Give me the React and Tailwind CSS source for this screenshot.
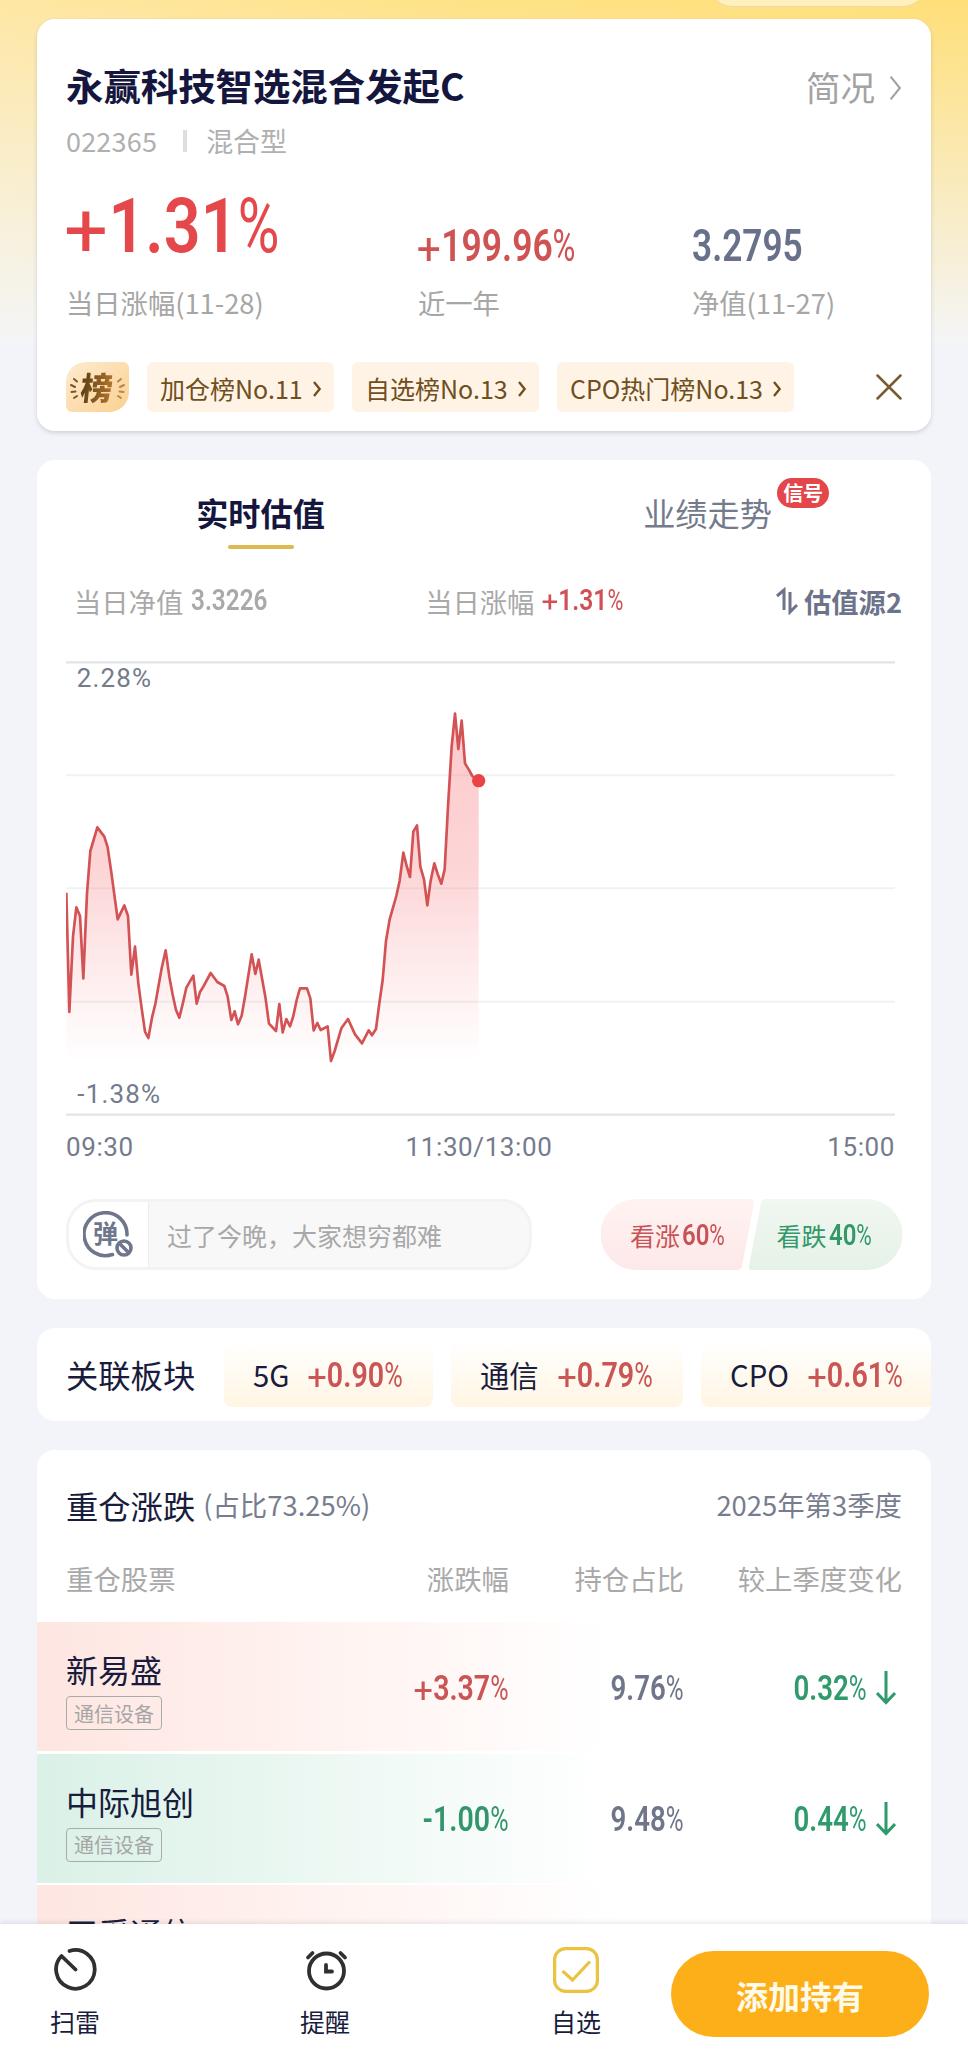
import React from 'react';

const ranks = [
  { text: '加仓榜No.11', width: 'w-[187px]' },
  { text: '自选榜No.13', width: 'w-[187px]' },
  { text: 'CPO热门榜No.13', width: 'w-[237px]' },
];

const sectors = [
  { name: '5G', change: '+0.90%', width: 'w-[209px]' },
  { name: '通信', change: '+0.79%', width: 'w-[232px]' },
  { name: 'CPO', change: '+0.61%', width: 'w-[240px]' },
];

const holdings = [
  { name: '新易盛', tag: '通信设备', change: '+3.37%', ratio: '9.76%', diff: '0.32%' },
  { name: '中际旭创', tag: '通信设备', change: '-1.00%', ratio: '9.48%', diff: '0.44%' },
  { name: '天孚通信' },
];

const linePoints =
  '79,758 88,1116 99,890 109,802 120,828 130,1015 141,760 151,633 172,562 193,590 203,622 214,697 233,838 253,796 264,828 274,1004 285,920 295,1030 305,1105 315,1175 325,1194 336,1133 346,1092 365,985 377,931 388,1010 398,1064 408,1110 418,1133 429,1088 439,1043 460,1007 470,1091 480,1056 490,1040 512,999 532,1026 553,1038 563,1070 574,1140 584,1114 594,1153 605,1127 615,1070 635,943 646,1002 656,959 676,1070 687,1151 708,1173 718,1092 728,1177 739,1137 750,1159 760,1128 770,1080 780,1045 801,1045 811,1075 821,1171 832,1149 842,1170 863,1159 873,1263 884,1233 904,1165 924,1137 945,1183 966,1210 986,1171 996,1186 1008,1167 1018,1090 1028,1020 1038,903 1049,838 1059,803 1069,768 1079,722 1090,638 1100,678 1110,711 1120,575 1131,556 1141,680 1152,718 1162,796 1172,722 1183,670 1193,702 1204,731 1214,688 1224,500 1235,320 1245,221 1255,327 1265,242 1275,370 1286,388 1297,408 1316,422';

// condensed digits: the box keeps the narrow width, the inner span is squeezed into it
// the plus and percent signs are lighter than the digits
const Num = ({ children, box, className, right }) => {
  const plus = children.startsWith('+');
  const percent = children.endsWith('%');
  const digits = children.replace('+', '').replace('%', '');

  return (
    <span className={`flex shrink-0 whitespace-nowrap font-['Roboto'] font-semibold ${right ? 'justify-end' : ''} ${box}`}>
      <span className={`inline-block ${right ? 'origin-right' : 'origin-left'} ${className}`}>
        {plus && <span className="relative top-[0.060em] mr-[0.070em] ml-[0.020em] inline-block scale-x-[1.200] font-normal">+</span>}
        {digits}
        {percent && <span className="-mr-[0.080em] inline-block origin-left scale-x-[0.880] font-normal">%</span>}
      </span>
    </span>
  );
};

const Chevron = ({ className }) => (
  <svg viewBox="0 0 12 24" fill="none" stroke="currentColor" className={className}>
    <path d="M1.5 1.5 10 12 1.5 22.5" />
  </svg>
);

const RankBadge = () => (
  <div className="relative flex h-[50px] w-[63px] items-center justify-center rounded-tl-[20px] rounded-tr-[6px] rounded-br-[20px] rounded-bl-[6px] bg-linear-to-br from-[#fdebd0] to-[#fbd08f]">
    <svg viewBox="0 0 63 50" fill="none" strokeWidth="2" strokeLinecap="round" className="absolute inset-0">
      <path d="M8 17l3 2.500M5 23l4 2M5.500 30l4-.5M8 36l3-2" stroke="#7a5527" />
      <path d="M55 17l-3 2.500M58 23l-4 2M57.500 30l-4-.5M55 36l-3-2" stroke="#b98748" />
    </svg>
    <span className="-mt-[2px] -skew-x-6 bg-linear-to-r from-[#5c3f16] to-[#b3752c] bg-clip-text text-[32px] leading-[40px] font-black text-transparent">
      榜
    </span>
  </div>
);

const FundCard = () => (
  <section className="mt-[19px] h-[412px] shrink-0 rounded-[18px] bg-white px-[29px] pt-[42px] shadow-[0_2px_4px_rgba(80,90,120,0.22)]">
    <div className="flex h-12 items-center justify-between">
      <h1 className="text-[37.400px] font-bold text-[#14163e]">永赢科技智选混合发起C</h1>
      <div className="flex items-center gap-[14px] pt-[3px] text-[34.500px] text-[#a3a3a3]">
        <span>简况</span>
        <Chevron className="mt-[2px] h-[26px] w-[13px] stroke-[2]" />
      </div>
    </div>
    <div className="mt-[15px] flex h-[34px] items-center text-[27px] text-[#b0b0b0]">
      <span className="tracking-[0.200px]">022365</span>
      <i className="mr-[19px] ml-[26px] h-[22px] w-[4px] bg-[#dedede]" />
      <span>混合型</span>
    </div>
    <div className="grid h-[162px] grid-cols-[352px_274px_1fr] items-end text-[27.300px] leading-[36px] text-[#a6a6a6]">
      <div>
        <Num box="mb-[20px] w-[212px] text-[#e5484a]" className="scale-x-[0.850] text-[76px] leading-[76px]">+1.31%</Num>
        <p>当日涨幅(11-28)</p>
      </div>
      <div>
        <Num box="mb-[15px] w-[160px] text-[#cf5353]" className="scale-x-[0.815] text-[43.500px] leading-[44px]">+199.96%</Num>
        <p>近一年</p>
      </div>
      <div>
        <Num box="mb-[15px] w-[110px] text-[#69708a]" className="scale-x-[0.810] text-[43.500px] leading-[44px]">3.2795</Num>
        <p>净值(11-27)</p>
      </div>
    </div>
    <div className="mt-[42px] flex items-center">
      <RankBadge />
      <div className="ml-[18px] flex gap-[18px]">
        {ranks.map((rank) => (
          <div
            key={rank.text}
            className={`flex h-[50px] items-center justify-between rounded-[6px] bg-[#fff3e6] pt-[4px] pr-[12px] pl-[13px] text-[25px] whitespace-nowrap text-[#6f4f20] ${rank.width}`}
          >
            <span>{rank.text}</span>
            <Chevron className="-mt-[1px] h-[16px] w-[10px] stroke-[3.500]" />
          </div>
        ))}
      </div>
      <svg viewBox="0 0 26 26" className="ml-auto h-[26px] w-[26px]" stroke="#7a5c30" strokeWidth="2.500" strokeLinecap="round">
        <path d="M1.500 1.500l23 23M24.500 1.500l-23 23" />
      </svg>
    </div>
  </section>
);

const Chart = () => (
  <svg viewBox="78 60 2487 1371" className="mt-[40px] h-[457px] w-[829px]" fill="none">
    <defs>
      <linearGradient id="area" x1="0" y1="221" x2="0" y2="1265" gradientUnits="userSpaceOnUse">
        <stop offset="0" stopColor="#f87f84" stopOpacity="0.420" />
        <stop offset="0.450" stopColor="#f98488" stopOpacity="0.340" />
        <stop offset="0.750" stopColor="#f98d90" stopOpacity="0.160" />
        <stop offset="1" stopColor="#f98d90" stopOpacity="0" />
      </linearGradient>
    </defs>
    <path d="M78 406H2565M78 745H2565M78 1085H2565" stroke="#eff2f3" strokeWidth="6" />
    <path d="M78 67H2565M78 1424H2565" stroke="#e1e5e7" strokeWidth="7" />
    <polygon points={`79,1265 ${linePoints} 1316,1265`} fill="url(#area)" />
    <polyline points={linePoints} stroke="#d35254" strokeWidth="8" strokeLinejoin="round" />
    <circle cx="1316" cy="422" r="20" fill="#e84347" />
    <g fill="#747b8b" fontFamily="Roboto" fontSize="78" letterSpacing="3.500">
      <text x="110" y="141">2.28%</text>
      <text x="112" y="1388">-1.38%</text>
    </g>
  </svg>
);

const BulletIcon = () => (
  <div className="relative ml-[14px] h-[48px] w-[52px] text-[#6f768c]">
    <svg viewBox="0 0 52 48" fill="none" stroke="currentColor" strokeWidth="3.600" strokeLinecap="round" className="absolute inset-0">
      <path d="M44 24A21.500 21.500 0 1 0 29.500 43.500" />
      <circle cx="41" cy="37" r="7" />
      <path d="M36.500 32.500l9 9" />
    </svg>
    <span className="absolute top-[8px] left-[10px] text-[25px] leading-[26px] font-bold">弹</span>
  </div>
);

const ValuationCard = () => (
  <section className="mt-[29px] h-[839px] shrink-0 rounded-[18px] bg-white px-[29px] pt-[28px]">
    <div className="-mx-[29px] grid grid-cols-2 text-[32.200px]">
      <div className="flex flex-col items-center">
        <span className="flex h-12 items-center font-bold text-[#14163e]">实时估值</span>
        <i className="mt-[9px] h-[4px] w-[66px] rounded-full bg-[#ddb950]" />
      </div>
      <div className="flex justify-center">
        <span className="relative flex h-12 items-center text-[#747b8c]">
          业绩走势
          <b className="absolute -top-[10px] left-[134px] flex h-[30px] w-[52px] items-center justify-center rounded-full bg-[#e3474b] text-[20px] leading-none whitespace-nowrap text-white">
            信号
          </b>
        </span>
      </div>
    </div>
    <div className="mt-[32px] flex h-10 items-center pl-[8px] text-[27.300px] text-[#a9a9a9]">
      <span>当日净值</span>
      <Num box="ml-[8px] w-[79px]" className="scale-x-[0.840] text-[29px]">3.3226</Num>
      <span className="ml-[155px]">当日涨幅</span>
      <Num box="ml-[8px] w-[82px] text-[#cf5055]" className="scale-x-[0.850] text-[29px]">+1.31%</Num>
      <span className="ml-auto flex items-center gap-[6px] font-bold text-[#6c738a]">
        <svg viewBox="0 0 22 28" className="h-[28px] w-[22px]" fill="none" stroke="currentColor" strokeWidth="3">
          <path d="M1 9 8 3V23M14 5V25L21 18" />
        </svg>
        估值源2
      </span>
    </div>
    <div className="-mt-[1px]">
      <Chart />
    </div>
    <div className="mt-[11px] grid h-8 w-[829px] grid-cols-[1fr_auto_1fr] items-center font-['Roboto'] text-[26px] tracking-[0.600px] text-[#747b8b]">
      <span>09:30</span>
      <span className="-ml-[3px] whitespace-nowrap">11:30/13:00</span>
      <span className="text-right">15:00</span>
    </div>
    <div className="mt-[39px] flex h-[71px] justify-between text-[25px]">
      <div className="flex w-[466px] items-center overflow-hidden rounded-[30px] border-[3px] border-[#f3f3f3] bg-[#f8f8f8]">
        <div className="flex h-full w-[80px] shrink-0 items-center border-r border-[#eee] bg-white">
          <BulletIcon />
        </div>
        <span className="ml-[18px] pt-[2px] text-[#a8a8a8]">过了今晚，大家想穷都难</span>
      </div>
      <div className="relative flex w-[301px]">
        <svg viewBox="0 0 301 71" className="absolute inset-0 h-[71px] w-[301px]">
          <defs>
            <linearGradient id="up" x1="0" y1="0" x2="0" y2="1">
              <stop offset="0" stopColor="#fff3f2" />
              <stop offset="1" stopColor="#fde8e8" />
            </linearGradient>
            <linearGradient id="down" x1="0" y1="0" x2="0" y2="1">
              <stop offset="0" stopColor="#f1f7f1" />
              <stop offset="1" stopColor="#e5f2e7" />
            </linearGradient>
          </defs>
          <path d="M35 0H150Q154 0 153 4L141 67Q140 71 136 71H35A35.500 35.500 0 0 1 35 0Z" fill="url(#up)" />
          <path d="M165 0H266A35.500 35.500 0 0 1 266 71H151Q147 71 148 67L160 4Q161 0 165 0Z" fill="url(#down)" />
        </svg>
        <div className="relative flex w-1/2 items-center pt-[2px] pl-[29px] text-[#c85356]">
          <span>看涨</span>
          <Num box="ml-[2px] -mt-[2px] w-[44px]" className="scale-x-[0.800] text-[30px]">60%</Num>
        </div>
        <div className="relative flex w-1/2 items-center pt-[2px] pl-[25px] text-[#33986a]">
          <span>看跌</span>
          <Num box="ml-[2px] -mt-[2px] w-[44px]" className="scale-x-[0.800] text-[30px]">40%</Num>
        </div>
      </div>
    </div>
  </section>
);

const SectorCard = () => (
  <section className="mt-[29px] flex h-[93px] shrink-0 items-center overflow-hidden rounded-[18px] bg-white pl-[29px]">
    <h2 className="w-[158px] shrink-0 text-[32.300px] text-[#191c3c]">关联板块</h2>
    <div className="flex gap-[18px]">
      {sectors.map((sector) => (
        <div
          key={sector.name}
          className={`flex h-[65px] shrink-0 items-center rounded-[8px] bg-linear-to-b from-white to-[#fff5e2] pl-[29px] text-[29.300px] text-[#191c3c] ${sector.width}`}
        >
          <span>{sector.name}</span>
          <Num box="mt-[3px] ml-[19px] w-[94px] text-[#cb5454]" className="scale-x-[0.820] text-[35px]">{sector.change}</Num>
        </div>
      ))}
    </div>
  </section>
);

const HoldingRow = ({ item }) => {
  const up = !item.change || item.change.startsWith('+');

  return (
    <div
      className={`grid h-[129px] shrink-0 grid-cols-[243px_200px_175px_218px] items-start bg-linear-to-r px-[29px] pt-[27px] to-[64%] ${up ? 'from-[#fee6e1] to-white' : 'from-[#daf1e7] to-white'}`}
    >
      <div>
        <p className="h-10 text-[32px] leading-[40px] text-[#191c3c]">{item.name}</p>
        {item.tag && (
          <span className="mt-[7px] flex h-[34px] w-[96px] items-center justify-center rounded-[4px] border border-[#aaa] pt-[1px] text-[20px] whitespace-nowrap text-[#a6a6a6]">
            {item.tag}
          </span>
        )}
      </div>
      {item.change && (
        <>
          <Num right box={`h-[80px] items-center ${up ? 'text-[#cb5454]' : 'text-[#33956c]'}`} className="scale-x-[0.815] text-[35px]">
            {item.change}
          </Num>
          <Num right box="h-[80px] items-center text-[#70768a]" className="scale-x-[0.790] text-[35px]">{item.ratio}</Num>
          <div className="flex h-[80px] items-center justify-end gap-[9px] pr-[6px] text-[#2f9a6b]">
            <Num right box="w-[76px]" className="scale-x-[0.790] text-[35px]">{item.diff}</Num>
            <svg viewBox="0 0 20 34" className="-mt-[3px] h-[34px] w-[20px]" fill="none" stroke="currentColor" strokeWidth="3">
              <path d="M10 0V31M1 22l9 9.500 9-9.500" />
            </svg>
          </div>
        </>
      )}
    </div>
  );
};

const HoldingsCard = () => (
  <section className="mt-[29px] h-[600px] shrink-0 rounded-t-[18px] bg-white pt-[31px]">
    <div className="flex h-12 items-center px-[29px] text-[27.400px] text-[#777d8e]">
      <h2 className="text-[32.300px] text-[#191c3c]">重仓涨跌</h2>
      <span className="ml-[8px] -mt-[1px]">(占比73.25%)</span>
      <span className="ml-auto -mt-[1px]">2025年第3季度</span>
    </div>
    <div className="mt-[31px] mb-[26px] grid h-9 grid-cols-[243px_200px_175px_218px] items-center px-[29px] text-right text-[27.400px] leading-[36px] whitespace-nowrap text-[#a9a9a9]">
      <span className="text-left">重仓股票</span>
      <span>涨跌幅</span>
      <span>持仓占比</span>
      <span>较上季度变化</span>
    </div>
    <div className="flex flex-col gap-[2.500px]">
      {holdings.map((item) => (
        <HoldingRow key={item.name} item={item} />
      ))}
    </div>
  </section>
);

const BottomBar = () => (
  <footer className="relative flex h-[139px] shrink-0 bg-white text-[25px] text-[#191c3c] shadow-[0_-2px_4px_rgba(60,60,80,0.10)]">
    <div className="flex w-[150px] flex-col items-center pt-[23px]">
      <svg viewBox="0 0 46 46" className="h-[46px] w-[46px]" fill="none" stroke="#303030" strokeWidth="3.800" strokeLinecap="round">
        <path d="M17.500 4A19.300 19.300 0 1 1 9.500 9L23.500 22.500" strokeLinejoin="round" />
      </svg>
      <span className="mt-[10px] leading-[36px]">扫雷</span>
    </div>
    <div className="flex w-[350px] flex-col items-center pt-[23px]">
      <svg viewBox="0 0 46 46" className="h-[46px] w-[46px]" fill="none" stroke="#303030" strokeWidth="3.800" strokeLinecap="round">
        <circle cx="24.500" cy="24" r="17.500" />
        <path d="M24 18V24.500H30M6 10.500l4.500-4.500M38.500 6l4.500 4.500" />
      </svg>
      <span className="mt-[10px] leading-[36px]">提醒</span>
    </div>
    <div className="flex w-[152px] flex-col items-center pt-[23px]">
      <svg viewBox="0 0 46 46" className="h-[46px] w-[46px]" fill="none" stroke="#e9c341" strokeWidth="3.200">
        <rect x="1.600" y="1.600" width="42.800" height="42.800" rx="11" />
        <path d="M9.500 24l10 9L37 14.500" />
      </svg>
      <span className="mt-[10px] leading-[36px]">自选</span>
    </div>
    <button className="mt-[27px] ml-[19px] h-[86px] w-[258px] rounded-full bg-[#fdaf19] pt-[2px] text-[32px] font-bold text-[#fffbea]">
      添加持有
    </button>
  </footer>
);

const App = () => {
  return (
    <div className="relative flex h-[2063px] w-[968px] flex-col overflow-hidden bg-[#f3f4fa] font-['Noto_Sans_CJK_SC',sans-serif]">
      <div className="absolute inset-x-0 top-0 h-[346px] bg-linear-to-r from-[#fee7a4] via-[#ffe285] to-[#ffdf78]" />
      <div className="absolute inset-x-0 top-0 h-[346px] bg-linear-to-b from-transparent to-[#f4f5f8]" />
      <div className="absolute -top-[60px] left-[707px] h-[67px] w-[221px] rounded-[26px] border border-[#eadcaa] bg-[#fff0bd]" />
      <main className="relative flex min-h-0 flex-1 flex-col overflow-hidden px-[37px]">
        <FundCard />
        <ValuationCard />
        <SectorCard />
        <HoldingsCard />
      </main>
      <BottomBar />
    </div>
  );
};

export default App;
